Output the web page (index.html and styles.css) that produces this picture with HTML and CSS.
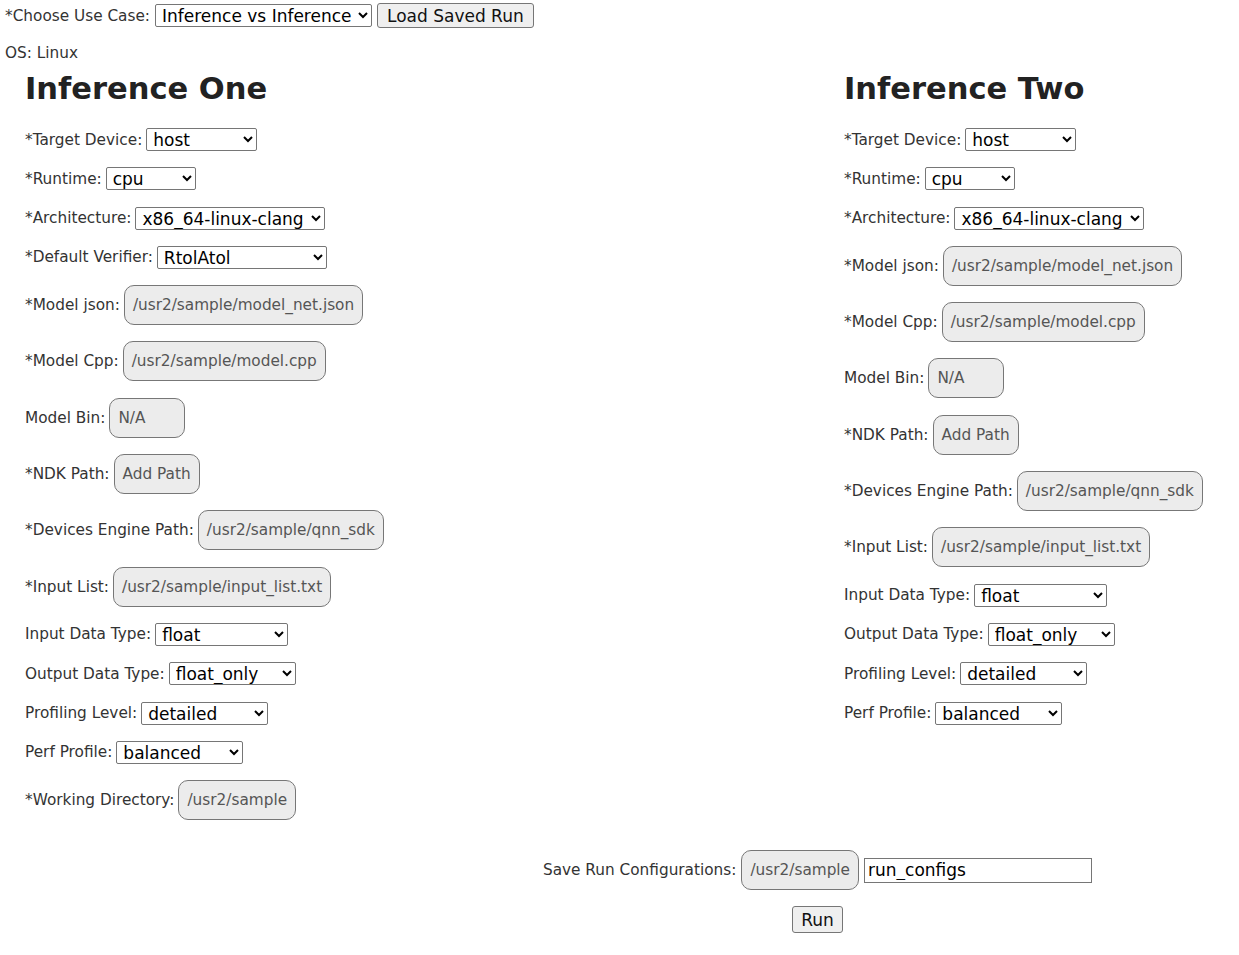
FILE: index.html
```html
<!DOCTYPE html>
<html>
<head>
<meta charset="utf-8">
<link rel="stylesheet" href="styles.css">
</head>
<body>
<div class="top">
  <label class="lbl">*Choose Use Case:</label>
  <select class="sel w-top"><option>Inference vs Inference</option></select>
  <button class="btn">Load Saved Run</button>
</div>
<div class="os">OS: Linux</div>
<div class="columns">
  <section class="col">
    <h2 class="title">Inference One</h2>
    <div class="row"><span class="lbl">*Target Device:</span><select class="sel w-host"><option>host</option></select></div>
    <div class="row"><span class="lbl">*Runtime:</span><select class="sel w-cpu"><option>cpu</option></select></div>
    <div class="row"><span class="lbl">*Architecture:</span><select class="sel w-arch"><option>x86_64-linux-clang</option></select></div>
    <div class="row"><span class="lbl">*Default Verifier:</span><select class="sel w-ver"><option>RtolAtol</option></select></div>
    <div class="row"><span class="lbl">*Model json:</span><button class="path">/usr2/sample/model_net.json</button></div>
    <div class="row"><span class="lbl">*Model Cpp:</span><button class="path">/usr2/sample/model.cpp</button></div>
    <div class="row"><span class="lbl">Model Bin:</span><button class="path">N/A</button></div>
    <div class="row"><span class="lbl">*NDK Path:</span><button class="path">Add Path</button></div>
    <div class="row"><span class="lbl">*Devices Engine Path:</span><button class="path">/usr2/sample/qnn_sdk</button></div>
    <div class="row"><span class="lbl">*Input List:</span><button class="path">/usr2/sample/input_list.txt</button></div>
    <div class="row"><span class="lbl">Input Data Type:</span><select class="sel w-float"><option>float</option></select></div>
    <div class="row"><span class="lbl">Output Data Type:</span><select class="sel w-127"><option>float_only</option></select></div>
    <div class="row"><span class="lbl">Profiling Level:</span><select class="sel w-127"><option>detailed</option></select></div>
    <div class="row"><span class="lbl">Perf Profile:</span><select class="sel w-127"><option>balanced</option></select></div>
    <div class="row"><span class="lbl">*Working Directory:</span><button class="path">/usr2/sample</button></div>
  </section>
  <section class="col">
    <h2 class="title">Inference Two</h2>
    <div class="row"><span class="lbl">*Target Device:</span><select class="sel w-host"><option>host</option></select></div>
    <div class="row"><span class="lbl">*Runtime:</span><select class="sel w-cpu"><option>cpu</option></select></div>
    <div class="row"><span class="lbl">*Architecture:</span><select class="sel w-arch"><option>x86_64-linux-clang</option></select></div>
    <div class="row"><span class="lbl">*Model json:</span><button class="path">/usr2/sample/model_net.json</button></div>
    <div class="row"><span class="lbl">*Model Cpp:</span><button class="path">/usr2/sample/model.cpp</button></div>
    <div class="row"><span class="lbl">Model Bin:</span><button class="path">N/A</button></div>
    <div class="row"><span class="lbl">*NDK Path:</span><button class="path">Add Path</button></div>
    <div class="row"><span class="lbl">*Devices Engine Path:</span><button class="path">/usr2/sample/qnn_sdk</button></div>
    <div class="row"><span class="lbl">*Input List:</span><button class="path">/usr2/sample/input_list.txt</button></div>
    <div class="row"><span class="lbl">Input Data Type:</span><select class="sel w-float"><option>float</option></select></div>
    <div class="row"><span class="lbl">Output Data Type:</span><select class="sel w-127"><option>float_only</option></select></div>
    <div class="row"><span class="lbl">Profiling Level:</span><select class="sel w-127"><option>detailed</option></select></div>
    <div class="row"><span class="lbl">Perf Profile:</span><select class="sel w-127"><option>balanced</option></select></div>
  </section>
</div>
<div class="bottom">
  <div class="row save">
    <span class="lbl">Save Run Configurations:</span>
    <button class="path">/usr2/sample</button>
    <input class="name" type="text" value="run_configs">
  </div>
  <button class="btn run">Run</button>
</div>
</body>
</html>
```

FILE: styles.css
```css
body {
  margin: 3px 5px;
  font-family: "DejaVu Sans", sans-serif;
  color: #333;
  background: #fff;
}
.top {
  display: flex;
  align-items: center;
  gap: 5px;
}
.lbl {
  font-size: 15.3px;
  color: #333;
  white-space: nowrap;
}
.sel {
  font-family: "DejaVu Sans", sans-serif;
  font-size: 17px;
  height: 23px;
  color: #000;
  background: #fff;
  border: 1px solid #767676;
  border-radius: 2px;
  padding: 0 2px;
}
.w-top { width: 217px; }
.w-host { width: 111px; }
.w-cpu { width: 90px; }
.w-arch { width: 190px; }
.w-ver { width: 170px; }
.w-float { width: 133px; }
.w-127 { width: 127px; }
.btn {
  font-family: "DejaVu Sans", sans-serif;
  font-size: 17px;
  color: #111;
  background: #efefef;
  border: 1px solid #767676;
  border-radius: 3px;
  height: 25px;
  padding: 0 9px;
}
.os {
  font-size: 15.3px;
  margin-top: 16px;
}
.columns {
  display: grid;
  grid-template-columns: 819px 1fr;
  padding-left: 20px;
}
.title {
  font-size: 30.5px;
  font-weight: bold;
  color: #222;
  margin: 9px 0 21px;
  line-height: 36px;
}
.row {
  display: flex;
  align-items: center;
  gap: 4px;
  margin-bottom: 16.3px;
}
.path {
  font-family: "DejaVu Sans", sans-serif;
  font-size: 15.3px;
  color: #555;
  background: #ececec;
  border: 1px solid #777;
  border-radius: 10px;
  height: 40px;
  min-width: 76px;
  padding: 0 8px;
  text-align: left;
}
.bottom {
  display: flex;
  flex-direction: column;
  align-items: center;
  padding-left: 396px;
  margin-top: 14px;
}
.save {
  gap: 5px;
  margin-bottom: 16px;
}
.name {
  font-family: "DejaVu Sans", sans-serif;
  font-size: 17px;
  width: 228px;
  height: 25px;
  box-sizing: border-box;
  border: 1px solid #767676;
  padding: 0 3px;
  color: #000;
}
.run {
  padding: 0 8px;
  height: 27px;
}
```
